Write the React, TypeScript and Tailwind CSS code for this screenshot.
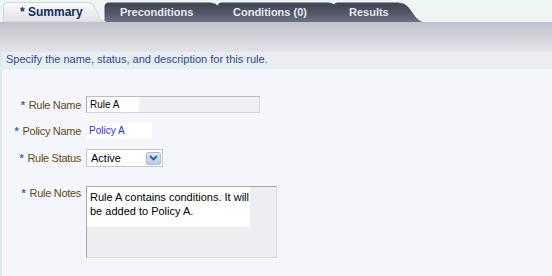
import React from "react";

type TabProps = {
  label: string;
  w: number;
  c: number;
  selected?: boolean;
  className: string;
};

// tab background: rounded top-left corner, flat top, swoosh down on the right
const Tab: React.FC<TabProps> = ({ label, w, c, selected, className }) => {
  const h = 20;
  const d = `M0.5 ${h} L0.5 5 Q0.5 0.5 5 0.5 L${w - c} 0.5 C${w - c / 2} 0.5 ${w - c / 2} ${h} ${w} ${h} Z`;
  const curve = `M${w - c} 0.5 C${w - c / 2} 0.5 ${w - c / 2} ${h} ${w} ${h}`;
  return (
    <div className={className}>
      <svg className="absolute inset-0" width={w} height={h} viewBox={`0 0 ${w} ${h}`}>
        <defs>
          <linearGradient id="tabOn" x1="0" y1="0" x2="0" y2="1">
            <stop offset="0" stopColor="#fbfbfd" />
            <stop offset="1" stopColor="#e2e1e9" />
          </linearGradient>
          <linearGradient id="tabOff" x1="0" y1="0" x2="0" y2="1">
            <stop offset="0" stopColor="#3d4351" />
            <stop offset="0.5" stopColor="#505666" />
            <stop offset="1" stopColor="#6d7282" />
          </linearGradient>
        </defs>
        <path
          d={d}
          fill={selected ? "url(#tabOn)" : "url(#tabOff)"}
          stroke={selected ? "#cfd6d9" : "none"}
        />
        {!selected && <path d={curve} fill="none" stroke="#ffffff" strokeOpacity="0.55" />}
      </svg>
      <span
        className={
          selected
            ? "relative block pl-[17px] text-[12px] font-bold leading-[20px] text-[#0e2a5c]"
            : "relative block pl-[16px] text-[11px] font-bold leading-[20px] text-[#e6eaf2]"
        }
      >
        {label}
      </span>
    </div>
  );
};

const Label: React.FC<{ text: string }> = ({ text }) => (
  <div className="flex w-[79px] shrink-0 justify-end text-[11px] leading-[14px] tracking-[-0.3px]">
    <span className="mr-[4px] font-bold text-[#3c6cab]">*</span>
    <span className="text-[#5e4b12]">{text}</span>
  </div>
);

const App: React.FC = () => {
  return (
    <div className="flex h-[276px] w-[552px] flex-col overflow-hidden bg-[#eef5f5] font-['Liberation_Sans',Arial,sans-serif]">
      <div className="flex h-[22px] items-end pl-[3px]">
        <Tab label="* Summary" w={103} c={18} selected className="relative z-10 h-[20px] w-[103px] shrink-0" />
        <Tab label="Preconditions" w={131} c={24} className="relative -ml-[2px] h-[20px] w-[131px] shrink-0" />
        <Tab label="Conditions (0)" w={136} c={24} className="relative -ml-[18px] h-[20px] w-[136px] shrink-0" />
        <Tab label="Results" w={93} c={27} className="relative -ml-[20px] h-[20px] w-[93px] shrink-0" />
      </div>

      <div className="h-[30px] bg-gradient-to-b from-[#c3c2cc] to-[#e4e3ea]" />
      <div className="h-[15px] border-l-2 border-[#d6ebea] bg-[#ecedf3] pl-[4px] text-[11px] leading-[15px] text-[#1c4e94]">
        Specify the name, status, and description for this rule.
      </div>
      <div className="h-[2px] bg-[#e2f0f2]" />

      <div className="flex flex-1 flex-col border-l-2 border-[#d6ebea] bg-[#f5f6fc] pt-[27px]">
        <div className="flex h-[17px] items-center">
          <Label text="Rule Name" />
          <div className="ml-[5px] flex h-[17px] w-[174px] border border-t-[#b6bac2] border-l-[#a4a8b0] border-r-[#d6dadd] border-b-[#d6dadd] bg-[#eef0f2]">
            <div className="w-[52px] bg-white pl-[3px] text-[10px] leading-[15px] text-black">Rule A</div>
          </div>
        </div>

        <div className="mt-[10px] flex h-[16px] items-center">
          <Label text="Policy Name" />
          <div className="ml-[6px] h-[16px] w-[65px] bg-white pl-[2px] text-[10px] leading-[16px] text-[#2b2bee]">
            Policy A
          </div>
        </div>

        <div className="mt-[10px] flex h-[18px] items-center">
          <Label text="Rule Status" />
          <div className="ml-[5px] flex h-[18px] w-[77px] items-center justify-between border border-[#c3c7cc] bg-white pl-[4px] pr-[1px]">
            <span className="text-[11px] leading-[14px] text-black">Active</span>
            <span className="flex h-[13px] w-[15px] items-center justify-center rounded-[2px] border border-[#a9bfdc] bg-gradient-to-b from-[#dde8f6] to-[#b7cbe6]">
              <svg width="9" height="6" viewBox="0 0 9 6">
                <path d="M1 1 L4.5 4.5 L8 1" fill="none" stroke="#3b5e96" strokeWidth="1.8" />
              </svg>
            </span>
          </div>
        </div>

        <div className="mt-[19px] flex items-start">
          <Label text="Rule Notes" />
          <div className="ml-[5px] h-[72px] w-[191px] border border-t-[#a4a8b0] border-l-[#a4a8b0] border-r-[#d9dce0] border-b-[#d9dce0] bg-[#eceef2]">
            <div className="h-[40px] w-[163px] bg-white pl-[3px] pt-[3px] text-[11px] leading-[14px] text-black">
              Rule A contains conditions. It will be added to Policy A.
            </div>
          </div>
        </div>
      </div>
    </div>
  );
};

export default App;
